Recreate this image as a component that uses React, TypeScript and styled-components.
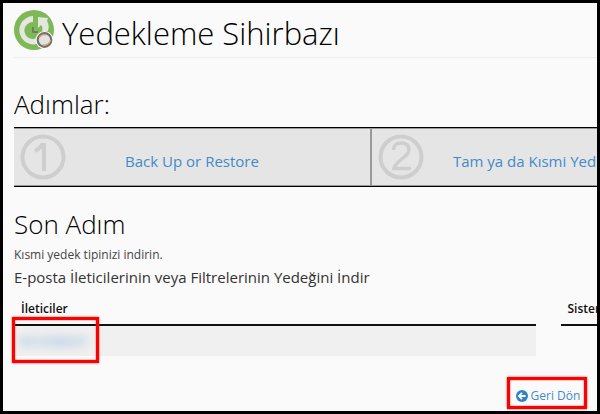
import React from "react";
import styled, { createGlobalStyle } from "styled-components";

const GlobalStyle = createGlobalStyle`
  *, *::before, *::after { box-sizing: border-box; }
  body {
    margin: 0;
    background: #000;
    color: #222;
    font-family: "Open Sans", "Noto Sans", sans-serif;
    font-size: 12px;
  }
`;

const Frame = styled.main`
  min-height: 100vh;
  padding: 0 11px;
  border: 3px solid #000;
  background: #fafafa;
  overflow: hidden;
`;

const Page = styled.div`
  min-width: 1068px;
`;

const Header = styled.header`
  display: flex;
  gap: 8px;
  height: 55px;
  padding-top: 7px;
  border-bottom: 1px solid #eee;
`;

const Title = styled.h1`
  margin: 0;
  color: #000;
  font-size: 31px;
  font-weight: 300;
  line-height: 46px;
`;

const SectionTitle = styled.h2`
  margin: 0;
  color: #000;
  font-size: 26px;
  font-weight: 300;
  line-height: 30px;
`;

const Section = styled.section<{ $top: number }>`
  padding-top: ${(p) => p.$top}px;
`;

const Steps = styled.nav`
  display: grid;
  grid-template-columns: 1fr 1fr 352px;
  margin-top: 8px;
  border-top: 1px solid #000;
  border-bottom: 1px solid #000;
  background: #e5e5e5;
`;

const Step = styled.div`
  display: grid;
  grid-template-columns: 46px 1fr 46px;
  align-items: center;
  height: 58px;
  padding: 0 6px;
  border: solid #999;
  border-width: 1px 2px 1px 0;
`;

const StepLink = styled.a`
  padding-top: 8px;
  color: #428bca;
  font-size: 15px;
  line-height: 20px;
  text-align: center;
  text-decoration: none;
  white-space: nowrap;
`;

const Note = styled.p`
  margin: 7px 0 0;
  color: #444;
  line-height: 18px;
`;

const Subtitle = styled.h3`
  margin: 3px 0 0;
  color: #333;
  font-size: 15px;
  font-weight: 400;
  line-height: 20px;
`;

const Tables = styled.div`
  display: grid;
  grid-template-columns: 1fr 1fr;
  align-items: start;
  gap: 25px;
  margin-top: 11px;
`;

const Table = styled.table`
  width: 100%;
  border-collapse: collapse;
`;

const HeadCell = styled.th`
  height: 27px;
  padding: 0 7px 4px;
  border-bottom: 2px solid #111;
  color: #111;
  font-size: 12px;
  font-weight: 600;
  line-height: 16px;
  text-align: left;
`;

const Cell = styled.td`
  position: relative;
  height: 31px;
  padding: 0 5px;
  background: #f0f0f0;
`;

const Redacted = styled.span`
  display: block;
  width: 68px;
  height: 11px;
  background: linear-gradient(90deg, #cbdbea, #d5e0ea 30%, #c8d8e8 60%, #d5e0ea);
  filter: blur(4px);
`;

const CellMark = styled.span`
  position: absolute;
  top: -9px;
  left: -2px;
  width: 87px;
  height: 46px;
  border: 3px solid #f00;
  box-shadow: 0 0 2px #a55, inset 0 0 2px #a55;
`;

const Footer = styled.footer`
  display: flex;
  justify-content: center;
  margin-top: 21px;
`;

const BackLink = styled.a`
  display: flex;
  align-items: center;
  gap: 3px;
  height: 32px;
  margin-right: 2px;
  padding: 5px 4px 0 6px;
  border: 3px solid #f00;
  box-shadow: 0 0 2px #a55, inset 0 0 2px #a55;
  color: #428bca;
  font-size: 12px;
  line-height: 18px;
  text-decoration: none;
`;

const WizardIcon = () => (
  <svg width="40" height="40" viewBox="0 0 40 40" aria-hidden="true">
    <circle cx="20" cy="20" r="20" fill="#7fb857" />
    <path
      d="M19 6A14.200 14.200 0 1 0 32 27L27 23A8.500 8.500 0 1 1 19 12Z"
      fill="#e3e7df"
    />
    <path d="M24 7L34 8L33 11C35 14 35 18 34 21H28C29 18 28 16 27 15L24 18Z" fill="#e3e7df" />
    <path d="M19 17V22H24" fill="none" stroke="#687060" strokeWidth="1.500" />
    <circle cx="30.500" cy="30" r="9" fill="#fff" />
    <circle cx="30.500" cy="30" r="6.800" fill="#e2e2e2" stroke="#707070" strokeWidth="2.200" />
    <path d="M25.500 27A6 6 0 0 1 32 25M36.500 30C36 34 33 35 29 35" fill="none" stroke="#dda052" strokeWidth="1.300" />
  </svg>
);

const StepNumber = ({ value }: { value: number }) => (
  <svg width="46" height="46" viewBox="0 0 46 46" role="img" aria-label={`${value}`}>
    <circle cx="23" cy="23" r="20.500" fill="none" stroke="#cecece" strokeWidth="4" />
    {value === 1 ? (
      <path d="M24 37V9M15 17C19 15 21.500 13 23 9" fill="none" stroke="#cecece" strokeWidth="4" />
    ) : (
      <path
        d="M15.500 16C15.500 11.500 18.500 9 23 9C28 9 31 11.500 31 16C31 23 18 26 16 34.500H33"
        fill="none"
        stroke="#cecece"
        strokeWidth="3.500"
      />
    )}
  </svg>
);

const BackIcon = () => (
  <svg width="12" height="12" viewBox="0 0 12 12" aria-hidden="true">
    <circle cx="6" cy="6" r="6" fill="#2f83c5" />
    <path d="M6 2.800L3 6L6 9.200M3 6H9.500" fill="none" stroke="#fff" strokeWidth="1.800" />
  </svg>
);

const steps = ["Back Up or Restore", "Tam ya da Kısmi Yedekleme"];

export default function App() {
  return (
    <>
      <GlobalStyle />
      <Frame>
        <Page>
          <Header>
            <WizardIcon />
            <Title>Yedekleme Sihirbazı</Title>
          </Header>
          <Section $top={31}>
            <SectionTitle>Adımlar:</SectionTitle>
            <Steps>
              {steps.map((label, i) => (
                <Step key={label}>
                  <StepNumber value={i + 1} />
                  <StepLink href="#">{label}</StepLink>
                </Step>
              ))}
            </Steps>
          </Section>
          <Section $top={22}>
            <SectionTitle>Son Adım</SectionTitle>
            <Note>Kısmi yedek tipinizi indirin.</Note>
            <Subtitle>E-posta İleticilerinin veya Filtrelerinin Yedeğini İndir</Subtitle>
            <Tables>
              <Table>
                <thead>
                  <tr>
                    <HeadCell scope="col">İleticiler</HeadCell>
                  </tr>
                </thead>
                <tbody>
                  <tr>
                    <Cell>
                      <Redacted />
                      <CellMark />
                    </Cell>
                  </tr>
                </tbody>
              </Table>
              <Table>
                <thead>
                  <tr>
                    <HeadCell scope="col">Sistem</HeadCell>
                  </tr>
                </thead>
              </Table>
            </Tables>
          </Section>
          <Footer>
            <BackLink href="#">
              <BackIcon />
              Geri Dön
            </BackLink>
          </Footer>
        </Page>
      </Frame>
    </>
  );
}
